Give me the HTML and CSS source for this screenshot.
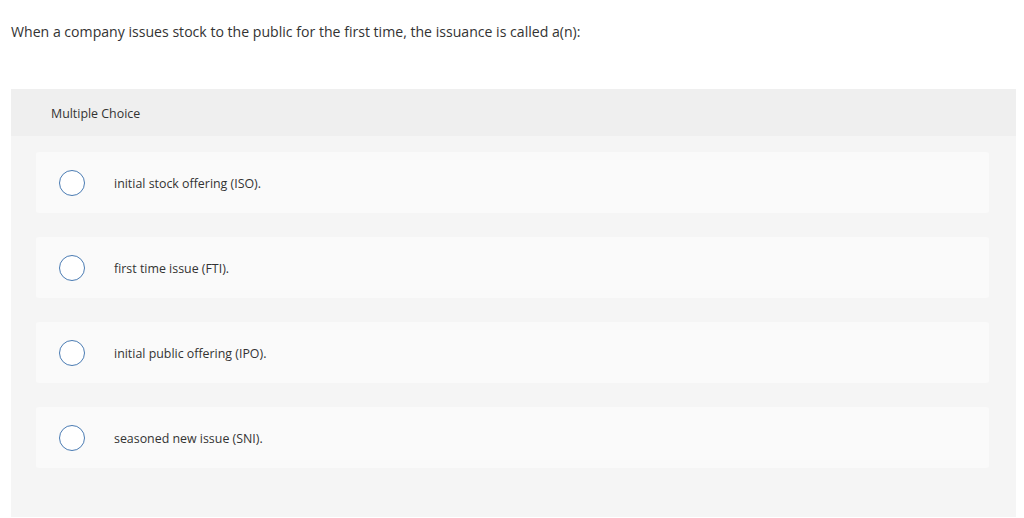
FILE: index.html
```html
<!DOCTYPE html>
<html>
<head>
<meta charset="utf-8">
<link rel="stylesheet" href="styles.css">
</head>
<body>
<p class="question">When a company issues stock to the public for the first time, the issuance is called a(n):</p>
<div class="panel">
  <div class="panel-header">Multiple Choice</div>
  <div class="panel-body">
    <div class="option"><span class="radio"></span><span class="label">initial stock offering (ISO).</span></div>
    <div class="option"><span class="radio"></span><span class="label">first time issue (FTI).</span></div>
    <div class="option"><span class="radio"></span><span class="label">initial public offering (IPO).</span></div>
    <div class="option"><span class="radio"></span><span class="label">seasoned new issue (SNI).</span></div>
  </div>
</div>
</body>
</html>
```

FILE: styles.css
```css
html, body {
  margin: 0;
  padding: 0;
  background: #ffffff;
  font-family: "Open Sans", "Liberation Sans", sans-serif;
  color: #333333;
}
.question {
  margin: 0;
  padding: 24px 11px 0 11px;
  font-size: 14.1px;
  line-height: 16px;
  height: 16px;
}
.panel {
  margin: 49px 8px 0 11px;
  background: #f5f5f5;
}
.panel-header {
  height: 47px;
  background: #efefef;
  padding-left: 40px;
  padding-top: 1px;
  box-sizing: border-box;
  display: flex;
  align-items: center;
  font-size: 12.4px;
}
.panel-body {
  display: flex;
  flex-direction: column;
  gap: 24px;
  padding: 16px 27px 49px 25px;
}
.option {
  height: 61px;
  background: #fafafa;
  border-radius: 3px;
  display: flex;
  align-items: center;
}
.radio {
  box-sizing: border-box;
  width: 26px;
  height: 26px;
  border: 1.5px solid #4a7bb3;
  border-radius: 50%;
  background: #ffffff;
  margin-left: 23px;
}
.label {
  margin-left: 29px;
  padding-top: 2px;
  font-size: 12.4px;
}
```
